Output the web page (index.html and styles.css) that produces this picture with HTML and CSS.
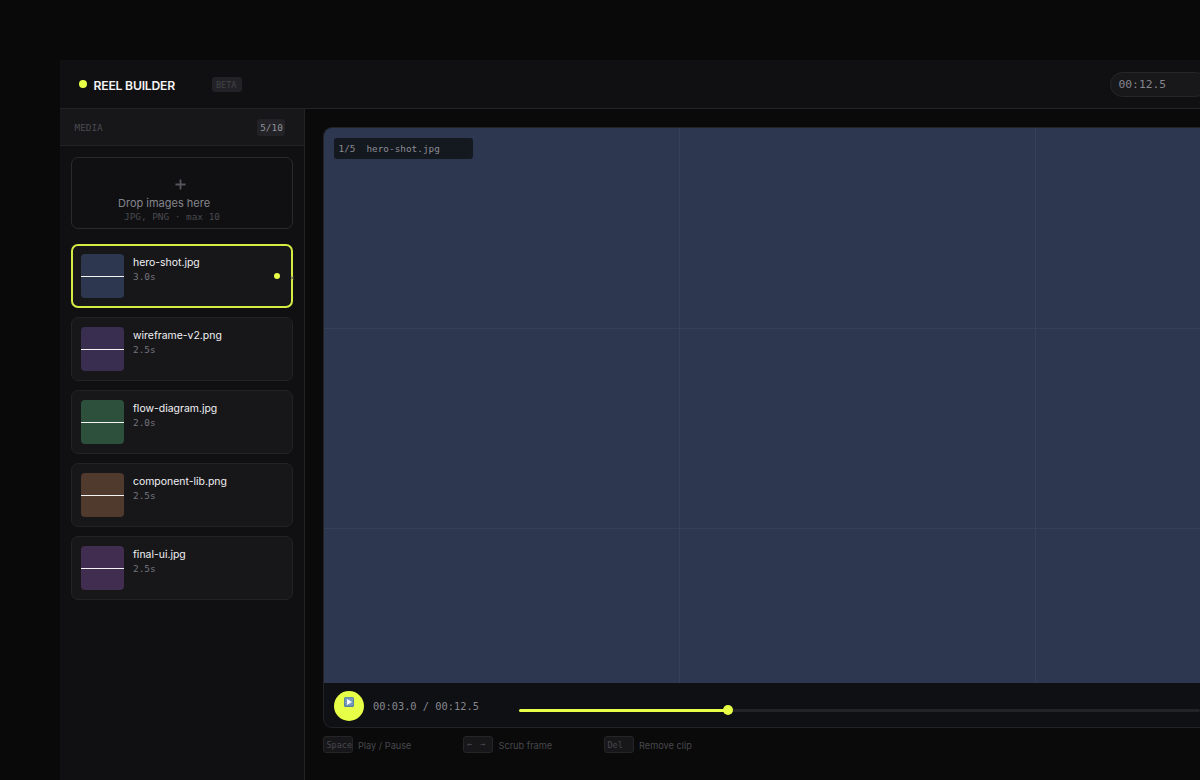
FILE: index.html
```html
<!DOCTYPE html>
<html lang="en">

<head>
    <meta charset="UTF-8">
    <meta name="viewport" content="width=device-width, initial-scale=1.0">
    <title>Reel Builder</title>
    <link rel="stylesheet" href="styles.css">
</head>

<body>
    <div class="app">
        <header>
            <span class="brand-dot"></span>
            <h1 class="brand-name">REEL BUILDER</h1>
            <span class="beta">BETA</span>
            <span class="total-time">00:12.5</span>
        </header>

        <div class="workspace">
            <aside class="sidebar">
                <div class="sidebar-head">
                    <h2>MEDIA</h2>
                    <span class="count">5/10</span>
                </div>

                <div class="media">
                    <div class="drop-zone">
                        <svg class="plus" viewBox="0 0 12 12"><path d="M6 0.5V11.5M0.5 6H11.5" /></svg>
                        <p class="drop-title">Drop images here</p>
                        <p class="drop-hint">JPG, PNG · max 10</p>
                    </div>

                    <div class="clip active">
                        <div class="thumb blue"></div>
                        <div class="clip-info">
                            <p class="clip-name">hero-shot.jpg</p>
                            <p class="clip-time">3.0s</p>
                        </div>
                        <span class="clip-dot"></span>
                        <span class="clip-remove">×</span>
                    </div>
                    <div class="clip">
                        <div class="thumb purple"></div>
                        <div class="clip-info">
                            <p class="clip-name">wireframe-v2.png</p>
                            <p class="clip-time">2.5s</p>
                        </div>
                    </div>
                    <div class="clip">
                        <div class="thumb green"></div>
                        <div class="clip-info">
                            <p class="clip-name">flow-diagram.jpg</p>
                            <p class="clip-time">2.0s</p>
                        </div>
                    </div>
                    <div class="clip">
                        <div class="thumb brown"></div>
                        <div class="clip-info">
                            <p class="clip-name">component-lib.png</p>
                            <p class="clip-time">2.5s</p>
                        </div>
                    </div>
                    <div class="clip">
                        <div class="thumb violet"></div>
                        <div class="clip-info">
                            <p class="clip-name">final-ui.jpg</p>
                            <p class="clip-time">2.5s</p>
                        </div>
                    </div>
                </div>
            </aside>

            <main>
                <div class="player">
                    <div class="canvas">
                        <div class="grid-line vertical first"></div>
                        <div class="grid-line vertical second"></div>
                        <div class="grid-line horizontal first"></div>
                        <div class="grid-line horizontal second"></div>
                        <div class="canvas-label"><span>1/5</span><span>hero-shot.jpg</span></div>
                    </div>
                    <div class="controls">
                        <button class="play-btn" aria-label="Play">
                            <svg viewBox="0 0 10 10">
                                <rect width="10" height="10" rx="1.5" fill="#587f9f" />
                                <rect x="0.8" y="0.6" width="8.4" height="8.2" rx="1" fill="#7599bd" />
                                <path d="M3 2L8 5L3 8Z" fill="#fff" />
                            </svg>
                        </button>
                        <span class="time">00:03.0 / 00:12.5</span>
                        <div class="track">
                            <div class="progress"></div>
                        </div>
                    </div>
                </div>

                <div class="shortcuts">
                    <div class="shortcut"><kbd>Space</kbd><span>Play / Pause</span></div>
                    <div class="shortcut"><kbd class="arrows"><span>←</span><span>→</span></kbd><span>Scrub frame</span></div>
                    <div class="shortcut"><kbd>Del</kbd><span>Remove clip</span></div>
                </div>
            </main>
        </div>
    </div>
</body>

</html>
```
FILE: styles.css
```css
* {
    margin: 0;
    padding: 0;
    box-sizing: border-box;
}

body {
    background-color: #090909;
    font-family: 'Inter', sans-serif;
    height: 780px;
    padding: 60px 0 0 60px;
    overflow: hidden;
}

.app {
    height: 720px;
    background-color: #0a0a0a;
    overflow: hidden;
}

header {
    height: 49px;
    display: flex;
    align-items: center;
    padding-left: 18.5px;
    background-color: #101012;
    border-bottom: 1px solid #232326;
}

.brand-dot {
    width: 8px;
    height: 8px;
    flex-shrink: 0;
    border-radius: 50%;
    background-color: #e8ff47;
}

.brand-name {
    width: 118px;
    flex-shrink: 0;
    margin-left: 7px;
    padding-top: 3px;
    font-size: 12.2px;
    font-weight: 600;
    letter-spacing: -0.22px;
    line-height: 16px;
    white-space: nowrap;
    color: #f4f4f5;
}

.beta {
    width: 30px;
    height: 15px;
    flex-shrink: 0;
    padding-left: 4.5px;
    border-radius: 3px;
    background-color: #222226;
    color: #424247;
    font: 8.5px/17px 'DejaVu Sans Mono', monospace;
}

.total-time {
    width: 98px;
    height: 25px;
    flex-shrink: 0;
    margin-left: 868px;
    padding-left: 8px;
    border: 1px solid #262629;
    border-radius: 13px;
    background-color: #18181b;
    color: #85858d;
    font: 11.3px/23px 'DejaVu Sans Mono', monospace;
}

.workspace {
    display: flex;
    height: 671px;
}

.sidebar {
    width: 245px;
    flex-shrink: 0;
    background-color: #101012;
    border-right: 1px solid #232326;
}

.sidebar-head {
    height: 37px;
    display: flex;
    justify-content: space-between;
    align-items: center;
    padding: 0 19px 0 14.5px;
    background-color: #17171a;
    border-bottom: 1px solid #232326;
}

.sidebar-head h2 {
    color: #4a4a50;
    font: 9.4px/17px 'DejaVu Sans Mono', monospace;
}

.count {
    width: 28px;
    height: 17px;
    padding-left: 1px;
    border-radius: 3px;
    background-color: #232327;
    color: #92929a;
    text-align: center;
    font: 9.4px/18px 'DejaVu Sans Mono', monospace;
}

.media {
    display: flex;
    flex-direction: column;
    gap: 9px;
    padding: 11px 11px 0;
}

.drop-zone {
    height: 72px;
    margin-bottom: 6px;
    padding-top: 21px;
    border: 1px solid #2a2a2d;
    border-radius: 7px;
}

.plus {
    display: block;
    width: 11px;
    height: 11px;
    margin-left: 103px;
    fill: none;
    stroke: #55555b;
    stroke-width: 2;
}

.drop-title {
    margin: 6px 0 0 46px;
    color: #85858d;
    font-size: 11px;
    line-height: 15px;
}

.drop-hint {
    margin: -1px 0 0 52px;
    color: #4a4a50;
    font: 9.4px/13px 'DejaVu Sans Mono', monospace;
}

.clip {
    position: relative;
    height: 64px;
    display: flex;
    padding: 9px 9px 0 8.5px;
    border: 1px solid #232326;
    border-radius: 7px;
    background-color: #17171a;
}

.clip.active {
    padding: 8px 8px 0 7.5px;
    border: 2px solid #d6ec45;
}

.thumb {
    width: 43.5px;
    height: 43.5px;
    padding-top: 22px;
    border-radius: 4px;
}

.active .thumb {
    padding-top: 21.5px;
}

.thumb::before {
    content: "";
    display: block;
    height: 1px;
    background-color: #f4f4f5;
}

.blue {
    background-color: #2d3850;
}

.purple {
    background-color: #392d50;
}

.green {
    background-color: #2d503d;
}

.brown {
    background-color: #50392d;
}

.violet {
    background-color: #402d50;
}

.clip-info {
    margin-left: 9px;
    padding-top: 1px;
}

.clip-name {
    color: #f0f0f2;
    font-size: 10.45px;
    line-height: 15px;
}

.clip-time {
    color: #74747c;
    font: 9.4px/14px 'DejaVu Sans Mono', monospace;
}

.clip-dot {
    width: 6px;
    height: 6px;
    margin: 18.5px 3.5px 0 auto;
    border-radius: 50%;
    background-color: #e8ff47;
}

.clip-remove {
    position: absolute;
    top: 25px;
    right: -4px;
    color: #55555b;
    font-size: 8px;
    line-height: 12px;
}

main {
    flex: 1;
    padding: 18px 0 0 17.5px;
}

/* player runs off the right side of the window */
.player {
    height: 601px;
    border: 1px solid #232326;
    border-right: none;
    border-radius: 9px 0 0 9px;
    background-color: #0f1013;
    overflow: hidden;
}

.canvas {
    position: relative;
    height: 555px;
    padding: 10px;
    background-color: #2d3850;
}

.grid-line {
    position: absolute;
    background-color: #364158;
}

.vertical {
    top: 0;
    width: 1px;
    height: 100%;
}

.horizontal {
    left: 0;
    width: 100%;
    height: 1px;
}

.vertical.first {
    left: 355.5px;
}

.vertical.second {
    left: 711.5px;
}

.horizontal.first {
    top: 200px;
}

.horizontal.second {
    top: 400px;
}

.canvas-label {
    width: 139px;
    height: 21px;
    display: flex;
    gap: 11px;
    padding-left: 5px;
    border-radius: 3px;
    background-color: #14181f;
    color: #8c8c94;
    font: 9.4px/21px 'DejaVu Sans Mono', monospace;
}

.controls {
    height: 45px;
    display: flex;
    align-items: center;
    padding-left: 10px;
}

.play-btn {
    width: 30px;
    height: 30px;
    padding-bottom: 7px;
    border: none;
    border-radius: 50%;
    background-color: #e8ff47;
}

.play-btn svg {
    display: block;
    width: 10px;
    height: 10px;
    margin: 0 auto;
}

.time {
    width: 146px;
    margin-left: 9.5px;
    color: #85858d;
    font: 10.35px/20px 'DejaVu Sans Mono', monospace;
}

.track {
    flex: 1;
    height: 3px;
    margin-top: 10px;
    border-radius: 2px;
    background-color: #232326;
}

.progress {
    position: relative;
    width: 209px;
    height: 3px;
    border-radius: 2px;
    background-color: #e8ff47;
}

.progress::after {
    content: "";
    position: absolute;
    top: -4px;
    right: -5px;
    width: 10px;
    height: 10px;
    border-radius: 50%;
    background-color: #e8ff47;
}

.shortcuts {
    display: flex;
    padding-top: 8px;
}

.shortcut {
    width: 140.5px;
    display: flex;
    gap: 5.5px;
    color: #48484d;
    font-size: 9.2px;
    line-height: 20px;
}

kbd {
    width: 30px;
    height: 17px;
    padding-left: 3px;
    border: 1px solid #252528;
    border-radius: 3px;
    background-color: #17171a;
    color: #48484d;
    white-space: nowrap;
    font: 8.5px/17px 'DejaVu Sans Mono', monospace;
}

.arrows {
    display: flex;
    gap: 8px;
    line-height: 15px;
}
```
